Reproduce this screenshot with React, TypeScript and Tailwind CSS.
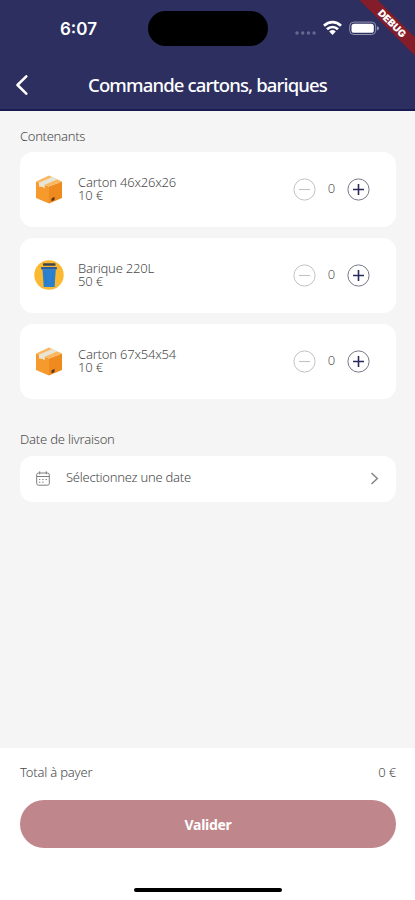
import React, { useState } from 'react';

interface Container {
  id: string;
  name: string;
  price: number;
  kind: 'carton' | 'barique';
}

const CONTAINERS: Container[] = [
  { id: 'carton-s', name: 'Carton 46x26x26', price: 10, kind: 'carton' },
  { id: 'barique', name: 'Barique 220L', price: 50, kind: 'barique' },
  { id: 'carton-l', name: 'Carton 67x54x54', price: 10, kind: 'carton' },
];

const CartonIcon = () => (
  <svg className="w-[30px] h-[30px] mb-px shrink-0" viewBox="0 0 30 30">
    <path d="M2 7.5 15 12.5V29.5L2 24Z" fill="#f79a2d" />
    <path d="M15 12.5 28 7.5V24L15 29.5Z" fill="#ee8a1e" />
    <path d="M2 7.5 15 1.5 28 7.5 15 12.5Z" fill="#fbb75f" />
    <path d="M5 8.7 18 2.9 23.5 5.3 10.8 10.8V14.4L8.8 12.9 5 12.6Z" fill="#e6e5d6" />
    <path d="M17.5 24.5 20.5 22.8V26L17.5 27.2Z" fill="#5b3518" />
  </svg>
);

const BariqueIcon = () => (
  <svg className="w-[30px] h-[30px] mb-px shrink-0" viewBox="0 0 30 30">
    <circle cx="15" cy="15" r="14.7" fill="#fbb931" />
    <rect x="9" y="3.3" width="12.5" height="2.5" rx="0.8" fill="#3c4550" />
    <rect x="7" y="7" width="16" height="2.6" rx="1" fill="#285c9f" />
    <path d="M8.5 9.3H21.8L20.6 27H9.7Z" fill="#2b80d0" />
    <path d="M11.5 11.5 12.2 25M18.8 11.5 18.1 25" stroke="#2778c5" strokeWidth="0.8" />
  </svg>
);

const CalendarIcon = () => (
  <svg className="w-[14px] h-[15px] mb-px shrink-0" viewBox="0 0 14 15" fill="none" stroke="#7d7d7d">
    <rect x="0.7" y="2" width="12.6" height="12.2" rx="1.8" />
    <path d="M0.7 5.5H13.3M3.7 0.3V3.3M10.3 0.3V3.3" />
    <path d="M3 8.5H4.3M6.3 8.5H7.6M9.6 8.5H10.9M3 11.2H4.3M6.3 11.2H7.6" />
  </svg>
);

const StatusBar = () => (
  <div className="relative h-[58px]">
    <span className="absolute left-[60px] top-[17px] font-['Inter'] text-[17px] leading-6 font-semibold text-white">
      6:07
    </span>
    <div className="absolute left-[148px] top-[11px] w-[120px] h-[35px] rounded-full bg-black" />
    {/* Signal, wifi and battery */}
    <svg className="absolute left-[292px] top-[18px] w-[92px] h-[20px]" viewBox="0 0 92 20">
      <g fill="#686a91">
        <circle cx="5" cy="15" r="1.7" />
        <circle cx="10.7" cy="15" r="1.7" />
        <circle cx="16.4" cy="15" r="1.7" />
        <circle cx="22.1" cy="15" r="1.7" />
      </g>
      <g fill="none" stroke="#fff" strokeWidth="2.7">
        <path d="M32 7.8C37.1 2.9 43.9 2.9 49 7.8" />
        <path d="M35 11.3C38.2 8.2 42.8 8.2 46 11.3" />
      </g>
      <path d="M37.2 13.4Q40.5 10.8 43.8 13.4L40.5 17Z" fill="#fff" />
      <rect x="57.7" y="4.1" width="26" height="12.4" rx="4" fill="none" stroke="#9696b1" />
      <rect x="59.5" y="5.8" width="22.3" height="9" rx="2.6" fill="#fff" />
      <path d="M85 8.2Q87 8.8 87 10.3T85 12.4Z" fill="#9696b1" />
    </svg>
  </div>
);

interface StepperProps {
  value: number;
  onChange: (value: number) => void;
}

const Stepper: React.FC<StepperProps> = ({ value, onChange }) => (
  <div className="flex items-center">
    <button disabled={value === 0} onClick={() => onChange(value - 1)}>
      <svg className="w-[23px] h-[23px]" viewBox="0 0 23 23" fill="none" stroke="#c2c2c2">
        <circle cx="11.5" cy="11.5" r="10.6" />
        <path d="M6 11.5H17" strokeWidth="1.1" />
      </svg>
    </button>
    <span className="w-[31px] pb-[3px] text-center text-[13px] leading-4 text-[#555]">{value}</span>
    <button onClick={() => onChange(value + 1)}>
      <svg className="w-[23px] h-[23px]" viewBox="0 0 23 23" fill="none">
        <circle cx="11.5" cy="11.5" r="10.6" stroke="#777987" />
        <path d="M6 11.5H17M11.5 6V17" stroke="#29295d" strokeWidth="1.6" />
      </svg>
    </button>
  </div>
);

export default function App() {
  const [quantities, setQuantities] = useState<Record<string, number>>({});

  const total = CONTAINERS.reduce((sum, c) => sum + c.price * (quantities[c.id] ?? 0), 0);

  return (
    <div className="relative flex flex-col w-[415px] h-[900px] overflow-hidden bg-[#f5f5f5] font-['Noto_Sans',sans-serif] font-light text-[#4a4a4a]">
      <header className="h-[111px] shrink-0 bg-[#2d2f61] border-b-2 border-[#1b1b52]">
        <StatusBar />
        <div className="flex items-center h-[54px] pl-[15px]">
          <svg className="w-[13px] h-[20px]" viewBox="0 0 13 20" fill="none" stroke="#fff" strokeWidth="2.5">
            <path d="M11.3 1.3 2.5 10 11.3 18.7" strokeLinecap="round" strokeLinejoin="round" />
          </svg>
          <h1 className="ml-[60px] whitespace-nowrap text-[18.5px] tracking-[-0.85px] font-medium text-white">
            Commande cartons, bariques
          </h1>
        </div>
      </header>

      {/* Debug ribbon */}
      <div className="absolute -right-[37px] top-[17px] w-[120px] h-[13px] rotate-45 bg-[#851c29] text-center font-['Inter'] text-[10px] leading-[13px] font-black text-white">
        DEBUG
      </div>

      <main className="flex-1 pl-5 pr-[19px] pt-[16px]">
        <h2 className="text-[13px] leading-[18px] tracking-[-0.3px]">Contenants</h2>
        <div className="mt-[7px] flex flex-col gap-[11px]">
          {CONTAINERS.map((c) => (
            <div key={c.id} className="flex items-center h-[75px] pl-[14px] pr-[26px] rounded-[13px] bg-white">
              {c.kind === 'carton' ? <CartonIcon /> : <BariqueIcon />}
              <div className="flex-1 pl-[14px] pb-[2px] text-[13px] leading-[13px] tracking-[-0.2px]">
                <p>{c.name}</p>
                <p>{c.price} €</p>
              </div>
              <Stepper
                value={quantities[c.id] ?? 0}
                onChange={(value) => setQuantities({ ...quantities, [c.id]: value })}
              />
            </div>
          ))}
        </div>

        <h2 className="mt-[31px] text-[13px] leading-[18px] tracking-[-0.2px]">Date de livraison</h2>
        <button className="mt-[8px] flex items-center w-full h-[46px] pl-4 pr-[17px] rounded-[13px] bg-white text-left">
          <CalendarIcon />
          <span className="flex-1 pl-[16px] pb-[2px] text-[13px] tracking-[-0.25px]">Sélectionnez une date</span>
          <svg className="w-[9px] h-[13px] mb-px" viewBox="0 0 9 13" fill="none" stroke="#858585" strokeWidth="1.5">
            <path d="M1.5 1 7.3 6.5 1.5 12" />
          </svg>
        </button>
      </main>

      <footer className="h-[152px] shrink-0 flex flex-col pl-5 pr-[19px] pt-[15px] bg-white">
        <div className="flex justify-between text-[13px] leading-[18px] tracking-[-0.2px]">
          <span>Total à payer</span>
          <span>{total} €</span>
        </div>
        <button className="mt-[19px] h-[48px] shrink-0 rounded-full bg-[#bf868b] text-[14px] tracking-[-0.3px] font-bold text-white">
          Valider
        </button>
        <div className="mt-[40px] w-[148px] h-[4px] shrink-0 self-center rounded-full bg-black" />
      </footer>
    </div>
  );
}
